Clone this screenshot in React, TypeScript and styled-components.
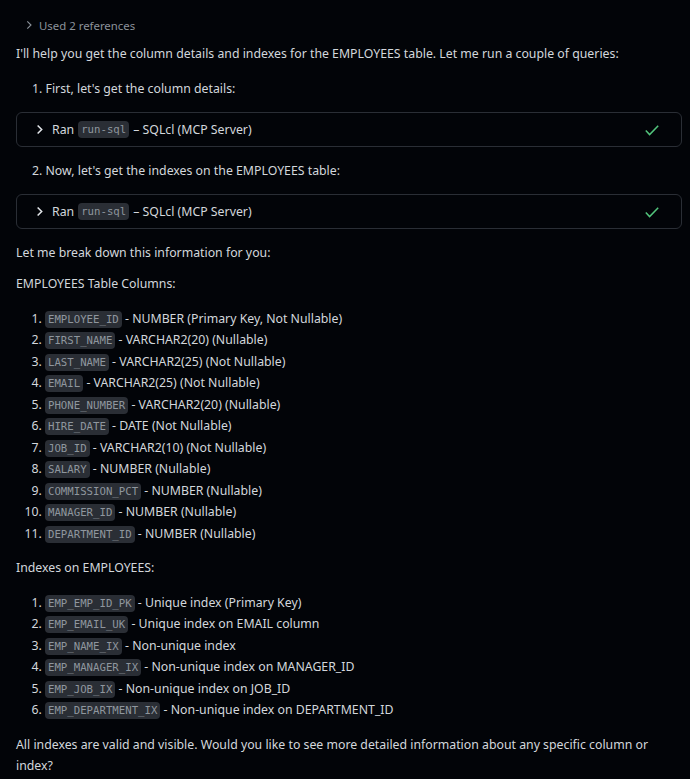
import React from 'react';
import styled, { createGlobalStyle } from 'styled-components';

const GlobalStyle = createGlobalStyle`
  html, body {
    margin: 0;
    padding: 0;
    background: #020408;
  }
  body {
    font-family: "Noto Sans", "Open Sans", sans-serif;
    font-size: 12.3px;
    color: #d3d7dc;
  }
`;

const Page = styled.div`
  width: 690px;
  min-height: 779px;
  box-sizing: border-box;
  padding: 14px 8px 0 16px;
  background: #020408;
`;

const References = styled.div`
  display: flex;
  align-items: center;
  gap: 5px;
  height: 22px;
  padding-left: 8px;
  color: #8b929a;
  font-size: 11.4px;
  margin-bottom: 7px;
`;

const Paragraph = styled.p<{ $after?: number }>`
  margin: 0 0 ${({ $after = 13 }) => $after}px;
  line-height: 22px;
`;

const Closing = styled.p`
  margin: 0;
  line-height: 21px;
`;

const Step = styled.div`
  padding-left: 16px;
  line-height: 22px;
  margin: 0 0 12px;
`;

const ToolBox = styled.div`
  display: flex;
  align-items: center;
  height: 35px;
  box-sizing: border-box;
  border: 1px solid #2a2e35;
  border-radius: 6px;
  padding: 0 21px 0 17px;
  margin-bottom: 13px;
  gap: 7px;
`;

const ToolText = styled.span`
  flex: 1;
  display: flex;
  align-items: center;
  gap: 4px;
`;

const Code = styled.code`
  font-family: "DejaVu Sans Mono", "Liberation Mono", monospace;
  font-size: 10.7px;
  color: #8f969e;
  background: #2a2e35;
  border-radius: 4px;
  padding: 2px 3px;
  line-height: 13px;
`;

const List = styled.ol`
  margin: 0 0 13px;
  padding-left: 29px;
  li {
    line-height: 21.45px;
  }
`;

const Chevron = ({ color = '#8b929a', size = 10, weight = 1.1 }: { color?: string; size?: number; weight?: number }) => (
  <svg width={size} height={size} viewBox="0 0 10 10">
    <path d="M3.3 1.3 L7 5 L3.3 8.7" fill="none" stroke={color} strokeWidth={weight} />
  </svg>
);

const Check = () => (
  <svg width="16" height="16" viewBox="0 0 16 16">
    <path d="M1.8 8.6 L5.6 12.6 L14.2 3.8" fill="none" stroke="#52c47c" strokeWidth="1.5" />
  </svg>
);

const columns: [string, string][] = [
  ['EMPLOYEE_ID', 'NUMBER (Primary Key, Not Nullable)'],
  ['FIRST_NAME', 'VARCHAR2(20) (Nullable)'],
  ['LAST_NAME', 'VARCHAR2(25) (Not Nullable)'],
  ['EMAIL', 'VARCHAR2(25) (Not Nullable)'],
  ['PHONE_NUMBER', 'VARCHAR2(20) (Nullable)'],
  ['HIRE_DATE', 'DATE (Not Nullable)'],
  ['JOB_ID', 'VARCHAR2(10) (Not Nullable)'],
  ['SALARY', 'NUMBER (Nullable)'],
  ['COMMISSION_PCT', 'NUMBER (Nullable)'],
  ['MANAGER_ID', 'NUMBER (Nullable)'],
  ['DEPARTMENT_ID', 'NUMBER (Nullable)'],
];

const indexes: [string, string][] = [
  ['EMP_EMP_ID_PK', 'Unique index (Primary Key)'],
  ['EMP_EMAIL_UK', 'Unique index on EMAIL column'],
  ['EMP_NAME_IX', 'Non-unique index'],
  ['EMP_MANAGER_IX', 'Non-unique index on MANAGER_ID'],
  ['EMP_JOB_IX', 'Non-unique index on JOB_ID'],
  ['EMP_DEPARTMENT_IX', 'Non-unique index on DEPARTMENT_ID'],
];

const RanBox = () => (
  <ToolBox>
    <Chevron color="#e2e5e9" size={11} weight={1.4} />
    <ToolText>
      Ran <Code>run-sql</Code> – SQLcl (MCP Server)
    </ToolText>
    <Check />
  </ToolBox>
);

export default function App() {
  return (
    <>
      <GlobalStyle />
      <Page>
        <References>
          <Chevron />
          <span>Used 2 references</span>
        </References>
        <Paragraph>
          I'll help you get the column details and indexes for the EMPLOYEES table. Let me run a couple of queries:
        </Paragraph>
        <Step>1. First, let's get the column details:</Step>
        <RanBox />
        <Step>2. Now, let's get the indexes on the EMPLOYEES table:</Step>
        <RanBox />
        <Paragraph $after={9}>Let me break down this information for you:</Paragraph>
        <Paragraph>EMPLOYEES Table Columns:</Paragraph>
        <List>
          {columns.map(([name, desc]) => (
            <li key={name}>
              <Code>{name}</Code> - {desc}
            </li>
          ))}
        </List>
        <Paragraph>Indexes on EMPLOYEES:</Paragraph>
        <List>
          {indexes.map(([name, desc]) => (
            <li key={name}>
              <Code>{name}</Code> - {desc}
            </li>
          ))}
        </List>
        <Closing>
          All indexes are valid and visible. Would you like to see more detailed information about any specific column or index?
        </Closing>
      </Page>
    </>
  );
}
